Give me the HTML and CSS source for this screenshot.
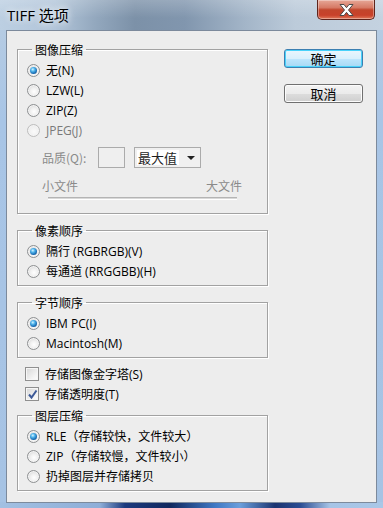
FILE: index.html
```html
<!DOCTYPE html>
<html lang="zh-CN">
<head>
    <meta charset="UTF-8">
    <meta name="viewport" content="width=device-width, initial-scale=1.0">
    <title>TIFF 选项</title>
    <link rel="stylesheet" href="styles.css">
</head>
<body>
    <div class="window">
        <div class="titlebar">
            <span class="title">TIFF 选项</span>
            <button class="close-btn" title="关闭">
                <svg width="17" height="14" viewBox="0 0 17 14">
                    <path d="M2 1.5h4l2.5 3.2 2.5-3.2h4l-4.5 5.5 4.5 5.5h-4l-2.5-3.2-2.5 3.2h-4l4.5-5.5z" fill="#fff" stroke="#4a4a4a" stroke-width="1" stroke-linejoin="round"/>
                </svg>
            </button>
        </div>

        <div class="client">
            <div class="options">
                <!-- 图像压缩 -->
                <fieldset class="group group-image">
                    <legend>图像压缩</legend>
                    <label class="opt"><span class="radio checked"></span>无(N)</label>
                    <label class="opt"><span class="radio"></span>LZW(L)</label>
                    <label class="opt"><span class="radio"></span>ZIP(Z)</label>
                    <label class="opt disabled"><span class="radio"></span>JPEG(J)</label>
                    <div class="quality">
                        <span class="q-label">品质(Q):</span>
                        <span class="q-input"></span>
                        <span class="q-select">
                            <span class="q-value">最大值</span>
                            <span class="q-arrow"></span>
                        </span>
                    </div>
                    <div class="size-labels">
                        <span>小文件</span>
                        <span>大文件</span>
                    </div>
                    <div class="slider"></div>
                </fieldset>

                <!-- 像素顺序 -->
                <fieldset class="group group-pixel">
                    <legend>像素顺序</legend>
                    <label class="opt"><span class="radio checked"></span>隔行 (RGBRGB)(V)</label>
                    <label class="opt"><span class="radio"></span>每通道 (RRGGBB)(H)</label>
                </fieldset>

                <!-- 字节顺序 -->
                <fieldset class="group group-byte">
                    <legend>字节顺序</legend>
                    <label class="opt"><span class="radio checked"></span>IBM PC(I)</label>
                    <label class="opt"><span class="radio"></span>Macintosh(M)</label>
                </fieldset>

                <div class="checks">
                    <label class="opt"><span class="checkbox"></span>存储图像金字塔(S)</label>
                    <label class="opt">
                        <span class="checkbox">
                            <svg width="11" height="11" viewBox="0 0 11 11">
                                <path d="M2 5.5l2.5 3L9.5 1.5" fill="none" stroke="#3d5a98" stroke-width="2"/>
                            </svg>
                        </span>存储透明度(T)
                    </label>
                </div>

                <!-- 图层压缩 -->
                <fieldset class="group group-layer">
                    <legend>图层压缩</legend>
                    <label class="opt"><span class="radio checked"></span>RLE（存储较快，文件较大）</label>
                    <label class="opt"><span class="radio"></span>ZIP（存储较慢，文件较小）</label>
                    <label class="opt"><span class="radio"></span>扔掉图层并存储拷贝</label>
                </fieldset>
            </div>

            <div class="actions">
                <button class="btn btn-default">确定</button>
                <button class="btn">取消</button>
            </div>
        </div>
    </div>
</body>
</html>
```

FILE: styles.css
```css
body { margin: 0; padding: 0; font-family: "Open Sans", "Noto Sans CJK SC", sans-serif; font-size: 12px; color: #000; }

.window { width: 383px; height: 508px; display: flex; flex-direction: column; box-sizing: border-box;
    background: linear-gradient(to right, #a2c0e2 0, #8eaed8 100px, #1c3a7e 125px, #10285e 170px, #3f78c4 215px, #6b9fdc 240px, #1b3470 275px, #2a4c92 300px, #a6c4e6 330px, #a9c7e7 383px) left bottom / 100% 6px no-repeat,
                linear-gradient(to bottom, #b9cde2 0, #a8c5e6 120px, #a6c3e4 100%); }

.titlebar { height: 30px; display: flex; align-items: flex-start;
    background: linear-gradient(to bottom, rgba(255,255,255,0.2), rgba(255,255,255,0) 60%),
                linear-gradient(to right, #bccfe2 0, #b2c5d9 55px, #93a8be 95px, #7c91a8 135px, #8196ae 185px, #a3b5c8 245px, #bccbda 295px, #c4d2e0 383px); }
.title { padding: 5px 0 0 7px; font-size: 15px; line-height: 20px; color: #000; text-shadow: 0 0 6px rgba(255,255,255,0.9), 0 0 10px rgba(255,255,255,0.6); }
.close-btn { margin-left: auto; margin-right: 8px; width: 58px; height: 20px; padding: 0; display: flex; align-items: center; justify-content: center;
    border: 1px solid #5e241c; border-top: none; border-radius: 0 0 5px 5px;
    background: linear-gradient(to bottom, #e6a797 0, #d67a65 40%, #c2452c 52%, #c8412a 80%, #e0785a 100%);
    box-shadow: inset 0 0 0 1px rgba(255,255,255,0.35); }

.client { flex: 1; margin: 0 6px 5px 6px; display: flex; background: #ededed; border: 1px solid #7c8a9c; }

.options { padding: 11px 0 0 10px; width: 251px; }
.group { width: 251px; box-sizing: border-box; margin: 0; padding: 3px 0 4px 9px; border: 1px solid #a2a2a2; box-shadow: 1px 1px 0 #fff, inset 1px 1px 0 #fff; min-width: 0; }
.group legend { margin-left: 5px; padding: 0 3px; line-height: 15px; height: 15px; font-family: "Noto Sans CJK SC", sans-serif; }
.group-image { padding-bottom: 13px; }
.group-pixel { margin-top: 9px; }
.group-byte { margin-top: 9px; }
.group-layer { margin-top: 4px; }

.opt { display: flex; align-items: center; height: 20px; gap: 6px; white-space: nowrap; }
.opt.disabled { color: #7a7a7a; }

.radio { width: 13px; height: 13px; box-sizing: border-box; border-radius: 50%; border: 1px solid #8e9092; position: relative; flex: none;
    background: radial-gradient(circle at 55% 60%, #ffffff 0, #f0f0f0 40%, #d4d4d4 85%); box-shadow: inset 0 0 0 1px #f4f4f4; }
.radio.checked::after { content: ""; position: absolute; left: 2px; top: 2px; width: 7px; height: 7px; border-radius: 50%;
    background: radial-gradient(circle at 40% 35%, #d8f4ff 0, #52b6ec 30%, #1a6db4 65%, #0d3d74 100%); }
.opt.disabled .radio { border-color: #bdbdbd; background: radial-gradient(circle at 55% 60%, #fafafa 0, #efefef 60%, #e2e2e2 100%); }

.quality { display: flex; align-items: center; margin: 7px 0 0 15px; height: 21px; color: #8a8a8a; }
.q-label { width: 56px; font-family: "Noto Sans CJK SC", sans-serif; }
.q-input { width: 27px; height: 21px; box-sizing: border-box; border: 1px solid #ababab; background: #efefef; }
.q-select { margin-left: 9px; width: 67px; height: 21px; box-sizing: border-box; border: 1px solid #ababab; background: #f0f0f0; display: flex; align-items: center; padding: 0 0 0 2px; }
.q-value { background: #fff; color: #1e1e1e; width: 41px; height: 15px; line-height: 15px; font-size: 13px; padding-left: 1px; font-family: "Noto Sans CJK SC", sans-serif; }
.q-arrow { margin-left: 8px; width: 0; height: 0; border-left: 4px solid transparent; border-right: 4px solid transparent; border-top: 4px solid #222; }

.size-labels { display: flex; justify-content: space-between; width: 200px; margin: 10px 0 0 15px; line-height: 16px; color: #8a8a8a; font-family: "Noto Sans CJK SC", sans-serif; }
.slider { margin: 3px 0 0 21px; width: 189px; height: 1px; border-top: 1px solid #b4b4b4; border-bottom: 1px solid #fff; background: #d8d8d8; }

.checks { padding: 6px 0 0 8px; }
.checkbox { width: 14px; height: 14px; box-sizing: border-box; border: 1px solid #8f8f8f; flex: none; display: flex; align-items: center; justify-content: center;
    background: linear-gradient(135deg, #d6d6d6 0, #f4f4f4 70%, #fdfdfd 100%); box-shadow: inset 0 0 0 1px #f6f6f6; }

.actions { padding: 18px 0 0 16px; display: flex; flex-direction: column; gap: 16px; }
.btn { width: 79px; height: 19px; padding: 0; font-family: "Noto Sans CJK SC", sans-serif; font-size: 13px; line-height: 15px; color: #000; border: 1px solid #707070; border-radius: 3px;
    background: linear-gradient(to bottom, #f3f3f3 0, #ebebeb 50%, #dddddd 51%, #cfcfcf 100%); box-shadow: inset 0 0 0 1px #fcfcfc; }
.btn-default { border-color: #3c7fb1; background: linear-gradient(to bottom, #eaf6fd 0, #d9f0fc 50%, #bee6fd 51%, #a7d9f5 100%); box-shadow: inset 0 0 0 1px #48d2fa; }
```
